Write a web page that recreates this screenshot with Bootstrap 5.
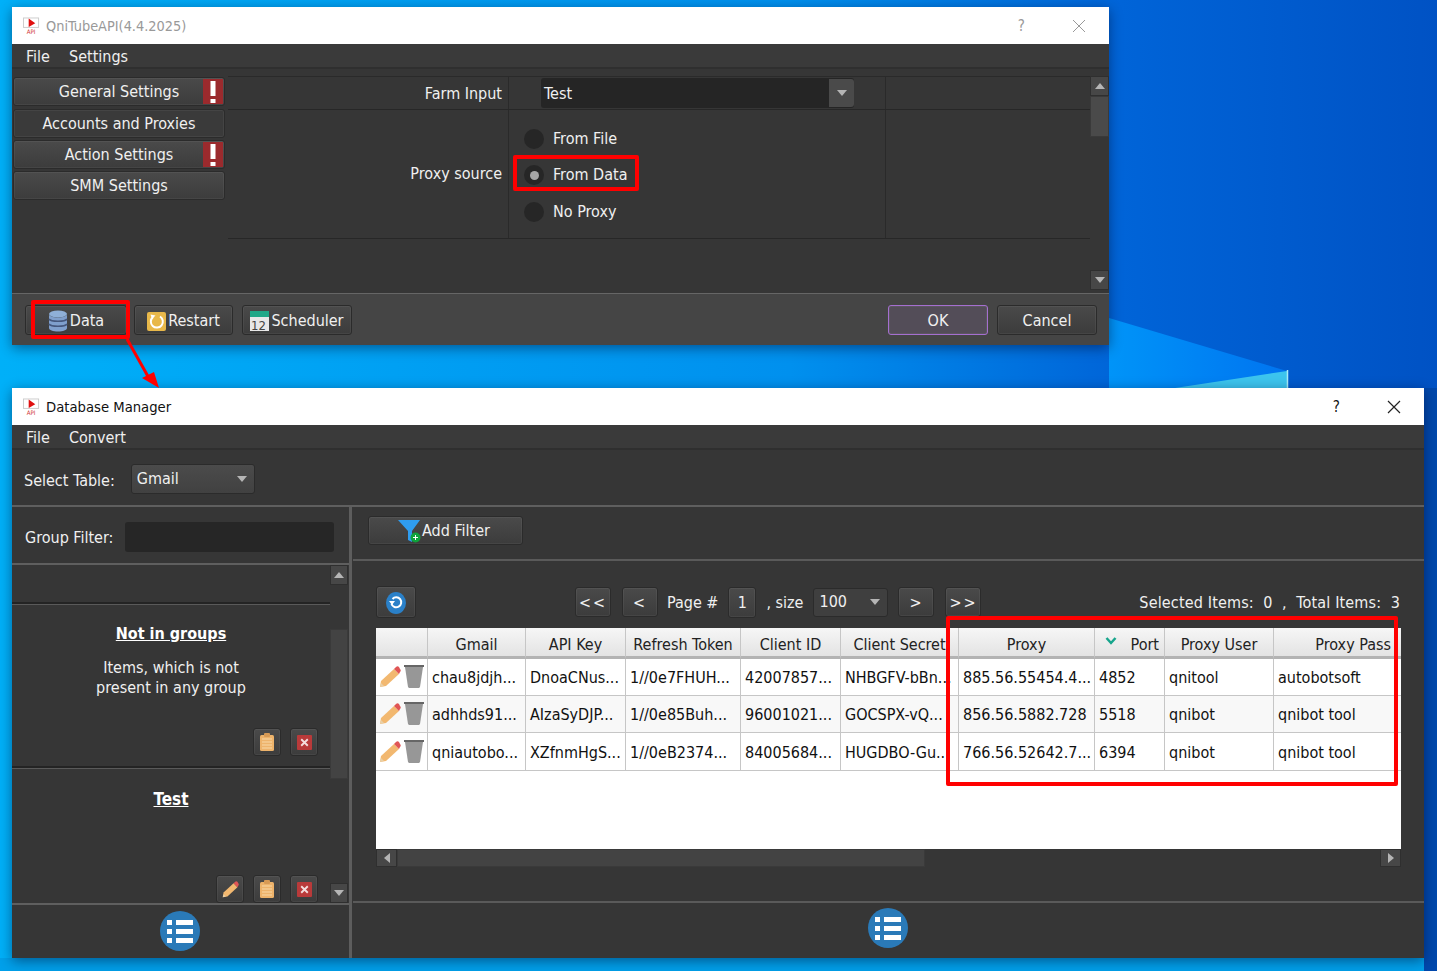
<!DOCTYPE html>
<html lang="en">
<head>
<meta charset="utf-8">
<title>QniTubeAPI</title>
<link href="https://cdn.jsdelivr.net/npm/bootstrap@5.3.0/dist/css/bootstrap.min.css" rel="stylesheet">
<style>
html,body{height:971px;overflow:hidden}
body{position:relative;width:1437px;background:#0078e0;font-family:"DejaVu Sans Condensed","DejaVu Sans",sans-serif;font-stretch:condensed;font-size:16px;line-height:20px;color:#f0f0f0}
.wall{position:absolute;left:0;top:0}
.qwin{position:absolute;display:flex;flex-direction:column;background:#363636;box-shadow:0 3px 12px rgba(0,0,30,.45)}
.w-one{left:12px;top:7px;width:1097px;height:338px}
.w-two{left:12px;top:388px;width:1412px;height:570px}
.qtitle{height:37px;background:#fff;flex:none;display:flex;align-items:center;padding-left:11px;color:#111;font-size:14.7px}
.w-one .qtitle{color:#999;font-size:14.4px}
.qtitle svg{margin-right:6px}
.qctl{margin-left:auto;display:flex;align-items:center;gap:47px;padding-right:17px}
.qq{font-size:15px}
.qmenu{height:25px;flex:none;background:#3a3a3a;border-bottom:2px solid #2f2f2f;display:flex;align-items:center;gap:19px;padding:2px 0 0 14px}
.w-one .qbody{flex:1;display:flex;min-height:0;padding-top:7px}
.snav{width:216px;flex:none;padding:1px 0 0 1px;display:flex;flex-direction:column;gap:2px}
.snav .qbtn:first-child{margin-bottom:1px}
.qbtn{background:linear-gradient(#4a4a4a,#3c3c3c);border:1px solid #2b2b2b;border-radius:3px;color:#f0f0f0;height:29px;padding:0;display:flex;align-items:center;justify-content:center;font-size:16px;box-shadow:inset 0 0 0 1px rgba(255,255,255,.05)}
.qbtn:hover{color:#f0f0f0}
.navb{width:212px;position:relative}
.navb.plain{background:#3a3a3a}
.alarm{position:absolute;right:1px;top:1px;bottom:1px;width:20px;background:#9b2a2d;display:flex;align-items:center;justify-content:center}
.formgrid{flex:1;min-width:0;display:flex;flex-direction:column}
.frow{display:flex;border-bottom:1px solid #272727}
.frow>div{border-right:1px solid #2a2a2a}
.fr-a{border-top:1px solid #2a2a2a;height:34px}
.fr-b{height:129px}
.flab{width:281px;text-align:right;padding-right:6px;align-self:stretch;display:flex;align-items:center;justify-content:flex-end}
.fval{width:377px;display:flex;padding-left:32px;align-items:center}
.fval-col{width:377px;display:flex;flex-direction:column;padding:2px 0 0 15px;justify-content:center;gap:16.5px}
.fr-a .flab{padding-top:1px}
.cbo{width:313px;height:30px;background:#252525;border-radius:3px;display:flex;align-items:center;padding-left:3px}
.cbo b{font-weight:400;flex:1;padding-top:2px}
.cbo i{width:25px;height:28px;background:#4a4a4a;display:flex;align-items:center;justify-content:center;border-radius:0 3px 3px 0}
.tri{display:block;width:0;height:0;border-left:5px solid transparent;border-right:5px solid transparent;border-top:6px solid #b5b5b5}
.tri.up{border-top:0;border-bottom:6px solid #b5b5b5}
.tri.lf{border-top:5px solid transparent;border-bottom:5px solid transparent;border-left:0;border-right:6px solid #b5b5b5}
.tri.rt{border-top:5px solid transparent;border-bottom:5px solid transparent;border-right:0;border-left:6px solid #b5b5b5}
.rad{display:flex;align-items:center;gap:9px;height:20px}
.rad i{width:20px;height:20px;border-radius:50%;background:#262626;display:flex;align-items:center;justify-content:center}
.rad i span{width:9px;height:9px;border-radius:50%;background:#a5a5a5}
.vbar{flex:none;display:flex;flex-direction:column;background:#363636}
.w-one .vbar{width:19px;margin-left:auto;padding-bottom:3px}
.w-one .formgrid{flex:none;width:862px}
.sbtn{height:20px;background:#474747;border:1px solid #2f2f2f;display:flex;align-items:center;justify-content:center;flex:none}
.thumb{background:#4a4a4a;border:1px solid #3a3a3a;flex:none}
.qfoot{height:52px;flex:none;background:#454545;border-top:1px solid #666;display:flex;align-items:center;padding:1px 12px 0 13px}
.qfoot .qbtn{height:30px;padding-top:2px}
.qfoot svg{margin-right:2px}
.b-data{width:102px;margin-right:7px}
.b-rest{width:99px;margin-right:9px}
.b-sche{width:110px}
.b-ok{width:100px;margin-left:auto;margin-right:9px;background:#534d58;border-color:#a56fd0}
.b-can{width:100px}

.tablebar{height:57px;flex:none;border-bottom:2px solid #5f5f5f;display:flex;align-items:center;padding:6px 0 0 12px}
.cbo2{margin-left:16px;height:30px;width:124px;background:linear-gradient(#4b4b4b,#414141);border:1px solid #2b2b2b;border-radius:3px;display:flex;align-items:center;justify-content:space-between;padding:0 7px 0 5px;position:relative;top:-2px}
.split{flex:1;display:flex;min-height:0}
.lpane{width:337px;flex:none;display:flex;flex-direction:column;border-right:3px solid #5d5d5d;box-sizing:content-box}
.gfil{height:58px;flex:none;border-bottom:2px solid #5f5f5f;display:flex;align-items:center;padding:5px 15px 0 13px}
.gfil div{flex:none;width:209px;margin-left:auto;height:30px;background:#262626;border-radius:3px;position:relative;top:-1px}
.gscroll{flex:1;min-height:0;display:flex}
.glist{flex:1;min-width:0;display:flex;flex-direction:column}
.g-stub{height:39px;border-bottom:2px solid #242424}
.gcard{border-top:1px solid #5a5a5a;position:relative;text-align:center}
.gcard.c-a{height:164px;padding-top:18px;border-bottom:2px solid #242424}
.gcard.c-b{flex:1;padding-top:19px}
.gname{font-weight:700;text-decoration:underline;font-size:17px;line-height:22px;color:#fff}
.c-a .gname{font-size:16px}
.gdesc{margin-top:13px;line-height:20px}
.gacts{position:absolute;right:12px;bottom:10px;display:flex;gap:9px}
.c-b .gacts{bottom:0}
.gacts .qbtn{width:28px;height:28px}
.lpane .vbar{width:18px;margin-right:1px}
.lpane .thumb{height:150px;margin-top:44px;margin-bottom:auto;background:#434343}
.lfoot{height:55px;flex:none;border-top:2px solid #5f5f5f;display:flex;align-items:center;justify-content:center;padding:0 1px 1px 0}
.rpane{flex:1;min-width:0;display:flex;flex-direction:column;padding-left:1px}
.fbar{height:54px;flex:none;border-bottom:2px solid #5a5a5a;display:flex;align-items:center;padding:0 0 6px 15px}
.b-add{width:155px;height:29px;padding:1px 3px 0 0}
.pager{display:flex;align-items:center;height:32px;margin:25px 24px 10px 23px}
.pager>span{padding-top:2px}
.pager .qbtn{padding-top:1px}
.pg{height:30px;width:36px;letter-spacing:2px}
.pg2{margin-left:11px}
.pg3{margin-left:10px}
.pg4{margin-left:11px}
.b-ref{width:40px;height:32px;margin-right:159px}
.pgtext{white-space:pre;margin-left:9px}
.pgnum{height:31px;width:28px;margin-left:10px}
.pager .pgnum+.pgtext{margin-left:10px}
.pgcbo{width:75px;height:29px;margin-left:10px;background:#3f3f3f;border:1px solid #2b2b2b;border-radius:3px;display:flex;align-items:center;justify-content:space-between;padding:0 7px 0 5px}
.stat{margin-left:auto;white-space:pre;letter-spacing:.16px}
.gridwrap{margin:0 23px;height:221px;background:#fff;overflow:hidden}
.dbgrid{table-layout:fixed;width:1026px;border-collapse:separate;border-spacing:0;color:#111;margin:0;font-size:16px}
.dbgrid th,.dbgrid td{border-right:1px solid #c6c6c6;white-space:nowrap;overflow:hidden;padding:2px 0 0 4px;vertical-align:middle;box-shadow:none;font-weight:400}
.dbgrid th{height:31px;text-align:center;background:linear-gradient(#f6f6f6,#e3e3e3);border-bottom:3px solid #b3b3b3;color:#222;padding:5px 0 0;line-height:23px}
.dbgrid td{height:37px;background:#fff;border-bottom:1px solid #c6c6c6}
.dbgrid tbody tr:last-child td{height:38px}
.dbgrid tr.alt td{background:#f8f8f8}
.dbgrid th.r-t{text-align:right;padding-right:10px}
.dbgrid th.r-p{text-align:right;padding-right:5px}
.dbgrid td.ico{padding:0 0 0 3px;line-height:0}
.pen-i{margin-right:3px}
.chev{float:left;margin:3px 0 0 10px}
.hbar{margin:0 23px;height:18px;display:flex;background:#363636}
.hbar .sbtn{width:21px;height:18px}
.hbar .thumb{width:528px;height:18px;background:#434343}
.hbar .sp{flex:1}
.rfoot{margin-top:auto;height:57px;flex:none;border-top:2px solid #5a5a5a;display:flex;align-items:center;justify-content:center;padding:0 1px 5px 0}
.rbox{position:absolute;border:4px solid #f00;border-radius:2px;pointer-events:none}
.arr{position:absolute;left:118px;top:336px;pointer-events:none}
</style>
</head>
<body>
<svg width="0" height="0" class="d-none">
  <symbol id="i-app" viewBox="0 0 18 18"><rect x=".5" y=".5" width="16" height="10" fill="#fff" stroke="#ccc"/><path d="M6 1v9l7-4z" fill="#e01010"/><text x="4" y="17" font-size="6.5" fill="#d03030" font-family="DejaVu Sans">API</text></symbol>
  <symbol id="i-pen" viewBox="0 0 22 22"><path d="M1 21l1-6L15 3l5 5L7 20z" fill="#f2b870"/><path d="M15 3l2-2c1-1 2-1 3 0l1 2c1 1 1 2 0 3l-1 2z" fill="#e05555"/><path d="M1 21l1-4 3 3z" fill="#e8d0a8"/></symbol>
  <symbol id="i-can" viewBox="0 0 20 24"><path d="M0 0h20v2H0z" fill="#666"/><path d="M1 2h18l-3 20-1 1H5l-1-1z" fill="#979797"/></symbol>
  <symbol id="i-clip" viewBox="0 0 14 18"><rect y="2" width="14" height="16" rx="1.500" fill="#edb36b"/><rect x="4" width="6" height="4" rx="1" fill="#d79a55"/><path d="M2 6h10M2 9h10M2 12h10M2 15h10" stroke="#f8d8a8" stroke-width="1"/></symbol>
  <symbol id="i-x" viewBox="0 0 16 16"><rect width="16" height="16" rx="1" fill="#b93a3a"/><path d="M4.500 4.500l7 7M11.500 4.500l-7 7" stroke="#f4dede" stroke-width="2"/></symbol>
  <symbol id="i-list" viewBox="0 0 40 40"><circle cx="20" cy="20" r="20" fill="#2a7ab8"/><path d="M7 9h5v5H7zM7 18h5v5H7zM7 27h5v5H7zM16 9h17v5H16zM16 18h17v5H16zM16 27h17v5H16z" fill="#fff"/></symbol>
  <symbol id="i-bang" viewBox="0 0 8 22"><path d="M1.500 0h5v15h-5zM1.500 18h5v4h-5z" fill="#fff"/></symbol>
</svg>

<svg class="wall" width="1437" height="971" aria-hidden="true">
  <defs>
    <linearGradient id="g1" x1="0" x2="1" y1="0" y2="0"><stop offset="0" stop-color="#00b0f8"/><stop offset=".55" stop-color="#0090ee"/><stop offset=".78" stop-color="#0064d8"/><stop offset="1" stop-color="#0052c4"/></linearGradient>
    <linearGradient id="g2" x1="0" x2="1" y1="0" y2="0"><stop offset="0" stop-color="#0094f8"/><stop offset="1" stop-color="#0074f0"/></linearGradient>
  </defs>
  <rect width="1437" height="971" fill="url(#g1)"/>
  <rect x="1424" y="388" width="13" height="583" fill="#0048ac"/>
  <path d="M1109 318l178 53v17h-178z" fill="url(#g2)"/>
  <path d="M1175 388l112-17v17z" fill="#3cc4ee"/>
  <path d="M1287.500 370v18" stroke="#a8ecf8" stroke-width="1.500"/>
  <rect y="958" width="1424" height="13" fill="#00a0ea"/>
</svg>

<section class="qwin w-one">
  <div class="qtitle"><svg width="17" height="18"><use href="#i-app"/></svg>QniTubeAPI(4.4.2025)
    <div class="qctl"><span class="qq">?</span><svg width="14" height="14"><path d="M1 1l12 12M13 1L1 13" stroke="#999" stroke-width="1" fill="none"/></svg></div>
  </div>
  <div class="qmenu"><span>File</span><span>Settings</span></div>
  <div class="qbody">
    <div class="snav">
      <button class="qbtn navb">General Settings<span class="alarm"><svg width="8" height="22"><use href="#i-bang"/></svg></span></button>
      <button class="qbtn navb plain">Accounts and Proxies</button>
      <button class="qbtn navb">Action Settings<span class="alarm"><svg width="8" height="22"><use href="#i-bang"/></svg></span></button>
      <button class="qbtn navb">SMM Settings</button>
    </div>
    <div class="formgrid">
      <div class="frow fr-a">
        <div class="flab">Farm Input</div>
        <div class="fval"><div class="cbo"><b>Test</b><i><span class="tri"></span></i></div></div>
      </div>
      <div class="frow fr-b">
        <div class="flab">Proxy source</div>
        <div class="fval-col">
          <div class="rad"><i></i>From File</div>
          <div class="rad"><i><span></span></i>From Data</div>
          <div class="rad"><i></i>No Proxy</div>
        </div>
      </div>
    </div>
    <div class="vbar">
      <div class="sbtn"><span class="tri up"></span></div>
      <div class="thumb" style="height:41px"></div>
      <div class="flex-grow-1"></div>
      <div class="sbtn"><span class="tri"></span></div>
    </div>
  </div>
  <div class="qfoot">
    <button class="qbtn b-data"><svg width="20" height="22" viewBox="0 0 20 22"><ellipse cx="10" cy="4" rx="9" ry="3.500" fill="#8fb0d8"/><path d="M1 4v14c0 2 4 3.500 9 3.500s9-1.500 9-3.500V4c0 2-4 3.500-9 3.500S1 6 1 4z" fill="#7f9fcc"/><path d="M1 9c2 3 16 3 18 0M1 14c2 3 16 3 18 0" stroke="#45577c" stroke-width="1.500" fill="none"/></svg>Data</button>
    <button class="qbtn b-rest"><svg width="19" height="19" viewBox="0 0 19 19"><rect width="19" height="19" rx="2" fill="#e8b84a"/><path d="M6 5a6 6 0 1 0 7-.500" stroke="#fff" stroke-width="2" fill="none"/><path d="M3.500 2.500l5 1-3.500 3.500z" fill="#fff"/></svg>Restart</button>
    <button class="qbtn b-sche"><svg width="19" height="20" viewBox="0 0 19 20"><rect width="19" height="20" fill="#e8e8e8"/><rect width="19" height="6" fill="#20a888"/><text x="1" y="18.500" font-size="13" fill="#444" font-family="DejaVu Sans Condensed">12</text></svg>Scheduler</button>
    <button class="qbtn b-ok">OK</button>
    <button class="qbtn b-can">Cancel</button>
  </div>
</section>

<section class="qwin w-two">
  <div class="qtitle"><svg width="17" height="18"><use href="#i-app"/></svg>Database Manager
    <div class="qctl"><span class="qq">?</span><svg width="14" height="14"><path d="M1 1l12 12M13 1L1 13" stroke="#222" stroke-width="1.200" fill="none"/></svg></div>
  </div>
  <div class="qmenu"><span>File</span><span>Convert</span></div>
  <div class="tablebar">Select Table:<div class="cbo2">Gmail<span class="tri"></span></div></div>
  <div class="split">
    <div class="lpane">
      <div class="gfil">Group Filter:<div></div></div>
      <div class="gscroll">
        <div class="glist">
          <div class="g-stub"></div>
          <div class="gcard c-a">
            <div class="gname">Not in groups</div>
            <div class="gdesc">Items, which is not<br>present in any group</div>
            <div class="gacts">
              <button class="qbtn"><svg width="14" height="18"><use href="#i-clip"/></svg></button>
              <button class="qbtn"><svg width="15" height="15"><use href="#i-x"/></svg></button>
            </div>
          </div>
          <div class="gcard c-b">
            <div class="gname">Test</div>
            <div class="gacts">
              <button class="qbtn"><svg width="17" height="17"><use href="#i-pen"/></svg></button>
              <button class="qbtn"><svg width="14" height="18"><use href="#i-clip"/></svg></button>
              <button class="qbtn"><svg width="15" height="15"><use href="#i-x"/></svg></button>
            </div>
          </div>
        </div>
        <div class="vbar">
          <div class="sbtn"><span class="tri up"></span></div>
          <div class="thumb"></div>
          <div class="sbtn"><span class="tri"></span></div>
        </div>
      </div>
      <div class="lfoot"><svg width="40" height="40"><use href="#i-list"/></svg></div>
    </div>
    <div class="rpane">
      <div class="fbar">
        <button class="qbtn b-add"><svg width="24" height="24" viewBox="0 0 24 24"><path d="M0 1h22l-8 11v11l-4-2v-9z" fill="#2f9df0"/><circle cx="17.500" cy="18.500" r="5" fill="#0fa33c"/><path d="M15 18.500h5M17.500 16v5" stroke="#fff" stroke-width="1"/></svg>Add Filter</button>
      </div>
      <div class="pager">
        <button class="qbtn b-ref"><svg width="20" height="22" viewBox="0 0 20 22"><ellipse cx="10" cy="11" rx="10" ry="11" fill="#2a80c8"/><path d="M6.500 7a5 5 0 1 1-1 5" stroke="#fff" stroke-width="2" fill="none"/><path d="M3 9h6l-3 4z" fill="#fff"/></svg></button>
        <button class="qbtn pg">&lt;&lt;</button>
        <button class="qbtn pg pg2">&lt;</button>
        <span class="pgtext">Page #</span>
        <button class="qbtn pgnum">1</button>
        <span class="pgtext">, size</span>
        <div class="pgcbo">100<span class="tri"></span></div>
        <button class="qbtn pg pg3">&gt;</button>
        <button class="qbtn pg pg4">&gt;&gt;</button>
        <span class="stat">Selected Items:  0  ,  Total Items:  3</span>
      </div>
      <div class="gridwrap">
        <table class="dbgrid">
          <colgroup><col style="width:52px"><col style="width:98px"><col style="width:100px"><col style="width:115px"><col style="width:100px"><col style="width:118px"><col style="width:136px"><col style="width:70px"><col style="width:109px"><col style="width:128px"></colgroup>
          <thead><tr><th></th><th>Gmail</th><th>API Key</th><th>Refresh Token</th><th>Client ID</th><th>Client Secret</th><th>Proxy</th><th class="r-p"><svg width="12" height="10" viewBox="0 0 12 10" class="chev"><path d="M1.500 2l4.500 5 4.500-5" stroke="#17a58c" stroke-width="2.500" fill="none"/></svg>Port</th><th>Proxy User</th><th class="r-t">Proxy Pass</th></tr></thead>
          <tbody>
            <tr><td class="ico"><svg width="22" height="22" class="pen-i"><use href="#i-pen"/></svg><svg width="20" height="24"><use href="#i-can"/></svg></td><td>chau8jdjh...</td><td>DnoaCNus...</td><td>1//0e7FHUH...</td><td>42007857...</td><td>NHBGFV-bBn...</td><td>885.56.55454.4...</td><td>4852</td><td>qnitool</td><td>autobotsoft</td></tr>
            <tr class="alt"><td class="ico"><svg width="22" height="22" class="pen-i"><use href="#i-pen"/></svg><svg width="20" height="24"><use href="#i-can"/></svg></td><td>adhhds91...</td><td>AIzaSyDJP...</td><td>1//0e85Buh...</td><td>96001021...</td><td>GOCSPX-vQ...</td><td>856.56.5882.728</td><td>5518</td><td>qnibot</td><td>qnibot tool</td></tr>
            <tr><td class="ico"><svg width="22" height="22" class="pen-i"><use href="#i-pen"/></svg><svg width="20" height="24"><use href="#i-can"/></svg></td><td>qniautobo...</td><td>XZfnmHgS...</td><td>1//0eB2374...</td><td>84005684...</td><td>HUGDBO-Gu...</td><td>766.56.52642.7...</td><td>6394</td><td>qnibot</td><td>qnibot tool</td></tr>
          </tbody>
        </table>
      </div>
      <div class="hbar">
        <div class="sbtn"><span class="tri lf"></span></div>
        <div class="thumb"></div>
        <div class="sp"></div>
        <div class="sbtn"><span class="tri rt"></span></div>
      </div>
      <div class="rfoot"><svg width="40" height="40"><use href="#i-list"/></svg></div>
    </div>
  </div>
</section>

<div class="rbox" style="left:513px;top:155px;width:126px;height:36px"></div>
<div class="rbox" style="left:31px;top:300px;width:99px;height:39px"></div>
<div class="rbox" style="left:946px;top:616px;width:452px;height:170px"></div>
<svg class="arr" width="44" height="54" viewBox="0 0 44 54"><path d="M9 3l23 41" stroke="#f00" stroke-width="3" fill="none"/><path d="M41 52L24 42l12-6z" fill="#f00"/></svg>

<script src="https://cdn.jsdelivr.net/npm/bootstrap@5.3.0/dist/js/bootstrap.bundle.min.js"></script>
</body>
</html>
